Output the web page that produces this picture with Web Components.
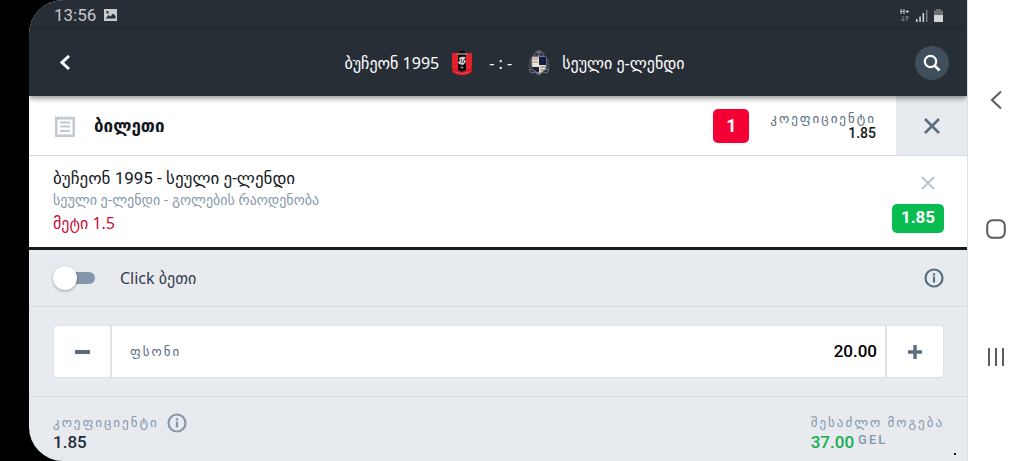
<!DOCTYPE html>
<html lang="ka">
<head>
<meta charset="utf-8">
<meta name="viewport" content="width=device-width, initial-scale=1">
<title>ბილეთი</title>
<style>
  html, body { margin: 0; }
  body {
    --ui: Roboto, "DejaVu Sans", sans-serif;
    --text: "Noto Sans", "DejaVu Sans", sans-serif;
    --slate: #5a6c80;
    --mist: #8697a9;
    --line: #d5dbe0;
    --panel: #e7eaef;
    background: #000;
    font-family: var(--ui);
    color: #14181d;
  }
</style>
</head>
<body>
<device-frame>
  <status-bar></status-bar>
  <match-header home="ბუჩეონ 1995" away="სეული ე-ლენდი"></match-header>
  <ticket-bar></ticket-bar>
  <bet-selection>
    <span slot="match">ბუჩეონ 1995 - სეული ე-ლენდი</span>
    <span slot="market">სეული ე-ლენდი - გოლების რაოდენობა</span>
    <span slot="pick">მეტი 1.5</span>
    <span slot="odds">1.85</span>
  </bet-selection>
  <click-bet></click-bet>
  <stake-field></stake-field>
  <ticket-summary></ticket-summary>
</device-frame>

<script>
const base = `:host,*{box-sizing:border-box}
button{border:0;padding:0;margin:0;background:none;color:inherit;font:inherit;display:grid;place-items:center;cursor:pointer}
svg{display:block}`;

function define(name, html) {
  customElements.define(name, class extends HTMLElement {
    constructor() {
      super();
      const root = this.attachShadow({ mode: "open" });
      const t = document.createElement("template");
      t.innerHTML = html(this);
      root.append(t.content.cloneNode(true));
    }
  });
}

define("info-icon", () => `<style>:host{display:block}svg{display:block}</style>
<svg width="20" height="20" viewBox="0 0 20 20" fill="none" stroke="currentColor" stroke-width="2.2"><circle cx="10" cy="10" r="8.5"/><path d="M10 8.600v6M10 5.200v2.200"/></svg>`);

define("tracked-label", () => `<style>:host{display:block;font:500 13px/16px var(--ui);letter-spacing:2px;color:var(--mist);white-space:nowrap}</style><slot></slot>`);

define("home-crest", () => `<style>:host{display:block}svg{display:block}</style>
<svg width="22" height="26" viewBox="0 0 22 26">
<path d="M1 3h20v13c0 4-5 7-10 9C6 23 1 20 1 16z" fill="#e3202b"/>
<path d="M7 3q4-5 8 0v17l-4 3-4-3z" fill="#090b0d"/>
<path d="M6 4h10" stroke="#d9a6a5" stroke-width="1.2"/>
<path d="M8 8q3-2 6-1l1 1-2 1 2 2-1 2-2 2-4-1-1-2 2-1z" fill="#cfcfcf"/>
<path d="M10 9l1 2-1 2M13 10l-1 3" stroke="#23272b" stroke-width=".8" fill="none"/>
<path d="M11 16v3M9.500 17.500h3" stroke="#8b7d7d"/>
<path d="M1 18q10 7 20 0v4q-10 7-20 0z" fill="#c91724"/>
<path d="M3 21.500q8 4 16 0" stroke="#ef7778" fill="none" stroke-width=".7"/></svg>`);

define("away-crest", () => `<style>:host{display:block}svg{display:block}</style>
<svg width="22" height="26" viewBox="0 0 22 26">
<path d="M6 6Q6 2 11 1q5 1 5 5zM11 0v6M8 3h6" fill="#1b2440" stroke="#8a8a90" stroke-width=".8"/>
<path d="M4 7h14v9c0 4-4 6-7 8-3-2-7-4-7-8z" fill="#eae4d5" stroke="#a0a1a6"/>
<path d="M11 7h7v8h-7z" fill="#141d48"/><path d="M4 17h7v6c-4-2-7-3-7-6z" fill="#1b2142"/>
<path d="M5 9h5M5 12h5" stroke="#c3ab81" stroke-width="1.5"/>
<path d="M12 17h5M12 20h4" stroke="#9f9484" stroke-width="1.4"/>
<path d="M2 9v5l-1 2 2 3M20 9v5l1 2-2 3" stroke="#625f67" fill="none"/>
<path d="M1 19l4 1 6 4 6-4 4-1-2 4-4-1-4 3-4-3-4 1z" fill="#252c47" stroke="#8f9096" stroke-width=".7"/></svg>`);

define("device-frame", () => `<style>${base}
:host{display:grid;grid-template-columns:29px 1fr 57px;min-height:100vh;background:#000}
main{grid-column:2;display:flex;flex-direction:column;background:var(--panel);border-radius:34px 0 0 34px;overflow:hidden;position:relative}
nav{background:#fff;border-left:1px solid #dcdfe3;display:flex;flex-direction:column;justify-content:space-between;align-items:center;padding:86px 0 90px;color:#5c5c5c}
nav button{height:28px;width:32px}
.dot{position:absolute;right:11px;bottom:6px;width:2px;height:2px;background:#111}
</style><main><slot></slot><i class="dot"></i></main>
<nav aria-label="System">
<button aria-label="Back"><svg width="12" height="20" viewBox="0 0 12 20" fill="none" stroke="currentColor" stroke-width="2"><path d="M11 1.5L2 10l9 8.5"/></svg></button>
<button aria-label="Home"><svg width="20" height="20" viewBox="0 0 20 20" fill="none" stroke="currentColor" stroke-width="2"><rect x="1.2" y="1.2" width="17.6" height="17.6" rx="5.5"/></svg></button>
<button aria-label="Recent"><svg width="18" height="18" viewBox="0 0 18 18" stroke="currentColor" stroke-width="2"><path d="M2 0v18M9 0v18M16 0v18"/></svg></button>
</nav>`);

define("status-bar", () => `<style>${base}
:host{display:flex;align-items:center;justify-content:space-between;height:30px;padding:0 24px 0 25px;background:#272e36;color:#c5c9cd;font:17px/20px var(--ui)}
div{display:flex;align-items:center;gap:8px}
.r{gap:6px}
</style>
<div><span>13:56</span><svg width="13" height="12" viewBox="0 0 13 12"><path fill="#c8cacc" fill-rule="evenodd" d="M0 0h13v12H0zM1.700 9.500h9.800V7L9 4.500 6.500 7.500l-2-1.500zM2.500 2v2.500h2V2z"/></svg></div>
<div class="r"><svg width="10" height="14" viewBox="0 0 10 14" fill="none" stroke="#bdc1c5"><path d="M1 1v5M4 1v5M1 3.5h3M5.5 3.5H9M7.2 2v3" stroke-width="1.2"/><path d="M3 8v5M1 11l2 2 2-2M7 13V8M5.200 10L7 8l2 2" stroke="#7b8187"/></svg>
<svg width="12" height="13" viewBox="0 0 12 13" fill="#d5d7d9"><path d="M0 10h1.500v3H0zM3.300 7.500h1.500V13H3.300zM6.600 4h1.500v9H6.600z"/><path fill="#737980" d="M10 1h1.500v12H10z"/></svg>
<svg width="9" height="13" viewBox="0 0 9 13"><path fill="#6c6f73" d="M2 0h5v1.500h2V6H0V1.500h2z"/><path fill="#d5d5d6" d="M0 6h9v7H0z"/></svg></div>`);

define("match-header", el => `<style>${base}
:host{display:grid;grid-template-columns:34px 1fr 34px;align-items:center;height:66px;padding:0 18px 0 19px;background:#272e36;color:#fff;box-shadow:0 2px 6px #0007;position:relative;font:16px/24px var(--text)}
.back{width:34px;height:36px}
.search{width:34px;height:34px;border-radius:50%;background:#414e5c}
h1{margin:0;font:inherit;display:flex;align-items:center;justify-content:center;gap:12px;white-space:nowrap;padding-left:32px}
.score{padding:0 4px}
</style>
<button class="back" aria-label="უკან"><svg width="12" height="16" viewBox="0 0 12 16" fill="none" stroke="currentColor" stroke-width="3"><path d="M10 1L3 7.500l7 6.500"/></svg></button>
<h1><span>${el.getAttribute("home")}</span><home-crest></home-crest><span class="score">- : -</span><away-crest></away-crest><span>${el.getAttribute("away")}</span></h1>
<button class="search" aria-label="ძებნა"><svg width="18" height="18" viewBox="0 0 18 18" fill="none" stroke="currentColor" stroke-width="2.200"><circle cx="7.500" cy="7.500" r="5.700"/><path d="M11.700 11.700L16.500 16.500" stroke-width="2.600"/></svg></button>`);

define("ticket-bar", () => `<style>${base}
:host{display:flex;align-items:center;height:60px;background:#fff;border-bottom:1px solid var(--line)}
h2{margin:0 auto 0 19px;font:bold 17px/24px var(--ui)}
.icon{margin:2px 0 0 26px}
.count{width:36px;height:34px;border-radius:5px;background:#f40035;color:#fff;font:bold 18px/33px var(--ui);text-align:center;margin-right:21px}
.odds{text-align:right;font:500 14px/14px var(--ui);margin-right:20px}
tracked-label{color:var(--slate);line-height:15px}
.close{align-self:stretch;width:71px;background:var(--panel);color:var(--slate)}
</style>
<svg class="icon" width="20" height="21" viewBox="0 0 20 21"><path fill="#c2c9d1" fill-rule="evenodd" d="M0 0l1.700 1.500L3.300 0 5 1.500 6.700 0l1.600 1.500L10 0l1.700 1.500L13.300 0 15 1.500 16.700 0l1.600 1.500L20 0v21H0zM2.500 3.500v15h15v-15zM5 5.500h10v2H5zm0 4h10v2H5zm0 4.500h10v2H5z"/></svg>
<h2>ბილეთი</h2><span class="count">1</span>
<div class="odds"><tracked-label>კოეფიციენტი</tracked-label>1.85</div>
<button class="close" aria-label="დახურვა"><svg width="16" height="16" viewBox="0 0 16 16" stroke="currentColor" stroke-width="2.600"><path d="M1 1l14 14M15 1L1 15"/></svg></button>`);

define("bet-selection", () => `<style>${base}
:host{display:flex;justify-content:space-between;height:94px;padding:10px 23px 0 24px;background:#fff;border-bottom:3px solid #171a20;font-family:var(--text)}
.info{display:flex;flex-direction:column;white-space:nowrap}
slot{display:block}
.match{font-family:var(--ui);font-size:17px;line-height:24px}
.market{font-size:14px;line-height:20px;color:var(--mist)}
.pick{font-size:16px;line-height:26px;color:#c8103e}
.side{display:flex;flex-direction:column;align-items:flex-end;padding-top:7px}
.remove{color:#bcc5ce;width:32px;height:20px}
.odds{margin-top:11px;width:52px;height:29px;border-radius:5px;background:#08bc50;color:#fff;font:bold 17px/27px var(--ui);text-align:center}
</style>
<div class="info"><slot class="match" name="match"></slot><slot class="market" name="market"></slot><slot class="pick" name="pick"></slot></div>
<div class="side"><button class="remove" aria-label="წაშლა"><svg width="14" height="14" viewBox="0 0 14 14" stroke="currentColor" stroke-width="2"><path d="M1 1l12 12M13 1L1 13"/></svg></button><span class="odds"><slot name="odds"></slot></span></div>`);

define("click-bet", () => `<style>${base}
:host{display:flex;align-items:center;justify-content:space-between;height:57px;padding:0 23px 0 24px;border-bottom:1px solid var(--line);font:16px/24px var(--text);color:#343d49}
label{display:flex;align-items:center;gap:25px}
input{appearance:none;margin:0;width:42px;height:24px;display:flex;align-items:center;position:relative}
input::before{content:"";position:absolute;inset:6px 0 6px 8px;border-radius:6px;background:#8496aa}
input::after{content:"";position:relative;width:24px;height:24px;border-radius:50%;background:#fff;box-shadow:0 1px 3px #0005}
input:checked::after{margin-left:auto}
button{color:var(--slate)}
</style>
<label><input type="checkbox" role="switch"><span>Click ბეთი</span></label><button aria-label="ინფორმაცია"><info-icon></info-icon></button>`);

define("stake-field", () => `<style>${base}
:host{display:block;padding:18px 23px 18px 24px;border-bottom:1px solid var(--line)}
.box{display:flex;height:53px;background:#fff;border:1px solid #dbe0e5;border-radius:4px;overflow:hidden}
button{width:58px;color:var(--slate);border-right:2px solid #e0e4e9}
.plus{border-right:0;border-left:2px solid #e0e4e9}
label{display:flex;align-items:center;padding-left:18px}
tracked-label{color:var(--slate)}
input{flex:1;min-width:0;border:0;outline:0;background:none;text-align:right;padding:0 8px 1px;font:500 17px/24px var(--ui);color:#000}
</style>
<div class="box"><button aria-label="შემცირება"><svg width="16" height="16" viewBox="0 0 16 16" stroke="currentColor" stroke-width="4"><path d="M1 8h15"/></svg></button>
<label for="stake"><tracked-label>ფსონი</tracked-label></label><input id="stake" inputmode="decimal" value="20.00">
<button class="plus" aria-label="გაზრდა"><svg width="16" height="16" viewBox="0 0 16 16" stroke="currentColor" stroke-width="3.400"><path d="M1 8h14M8 1v14"/></svg></button></div>`);

define("ticket-summary", () => `<style>${base}
:host{display:flex;justify-content:space-between;padding:16px 23px 6px 24px;font:500 17px/18px var(--ui);color:#262d37}
.head{display:flex;align-items:center;gap:8px;height:20px}
button{color:var(--mist)}
.win{display:flex;gap:4px;color:#17ad51}
.win tracked-label{line-height:14px}
</style>
<div><div class="head"><tracked-label>კოეფიციენტი</tracked-label><button aria-label="ინფორმაცია"><info-icon></info-icon></button></div>1.85</div>
<div><div class="head"><tracked-label>შესაძლო მოგება</tracked-label></div><div class="win">37.00<tracked-label>GEL</tracked-label></div></div>`);
</script>
</body>
</html>
